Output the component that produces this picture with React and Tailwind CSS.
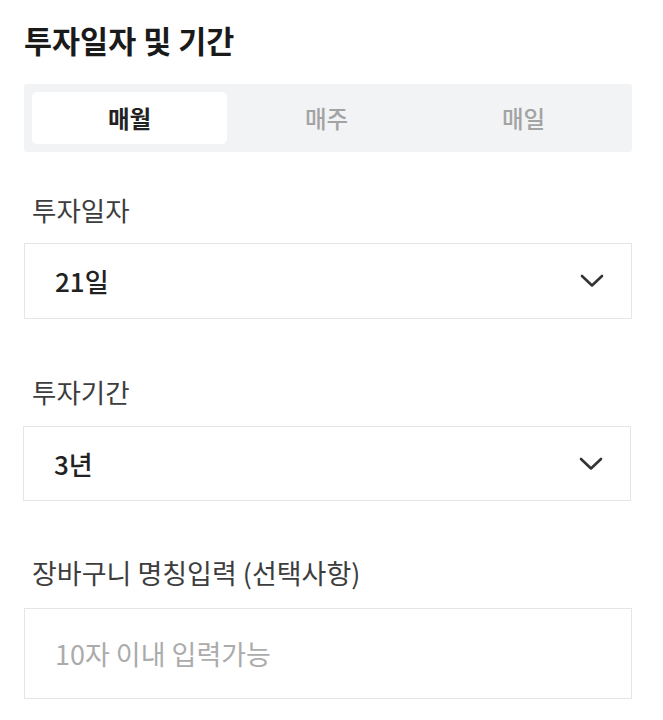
import React, { useState } from "react";

const FONT = { fontFamily: '"Noto Sans CJK KR", "Noto Sans", sans-serif' };

function Chevron() {
  return (
    <svg width="24" height="14" viewBox="0 0 24 14" fill="none">
      <polyline points="2,2 12,11.5 22,2" stroke="#333" strokeWidth="2.6" strokeLinecap="round" strokeLinejoin="round" />
    </svg>
  );
}

function SelectBox({ value, className }) {
  return (
    <button className={"flex items-center justify-between w-[608px] border-[1.5px] border-[#e5e5e5] bg-white pl-[30px] pr-[27px] text-left " + className}>
      <span className="text-[26px] leading-[30px] text-[#222] font-medium">{value}</span>
      <Chevron />
    </button>
  );
}

export default function App() {
  const [tab, setTab] = useState(0);
  const [name, setName] = useState("");
  const tabs = ["매월", "매주", "매일"];

  return (
    <div className="w-[663px] h-[720px] bg-white pl-[24px] pt-[23px] flex flex-col" style={FONT}>
      <h2 className="h-[34px] text-[30.5px] leading-[34px] font-bold text-[#1a1a1a]">투자일자 및 기간</h2>

      <div className="mt-[27px] h-[68px] w-[608px] bg-[#f2f3f5] rounded-[3px] p-[8px] flex">
        {tabs.map((t, i) => (
          <button
            key={t}
            onClick={() => setTab(i)}
            className={"w-[195px] mr-[2px] rounded-[5px] flex items-center justify-center text-[23.5px] leading-[28px] " +
              (tab === i ? "bg-white font-bold text-[#222]" : "text-[#a3a3a3] font-medium")}
          >
            {t}
          </button>
        ))}
      </div>

      <p className="mt-[43px] h-[30px] text-[26.5px] leading-[30px] text-[#3d3d3d] pl-[8px]">투자일자</p>
      <SelectBox value="21일" className="mt-[18px] h-[76px]" />

      <p className="mt-[58px] h-[30px] text-[26.5px] leading-[30px] text-[#3d3d3d] pl-[8px]">투자기간</p>
      <SelectBox value="3년" className="mt-[19px] h-[75px] -ml-[1px]" />

      <p className="mt-[57px] h-[30px] text-[27px] leading-[30px] text-[#3d3d3d] pl-[8px]">장바구니 명칭입력 (선택사항)</p>
      <input
        value={name}
        onChange={e => setName(e.target.value)}
        maxLength={10}
        placeholder="10자 이내 입력가능"
        className="mt-[20px] h-[91px] w-[608px] border-[1.5px] border-[#e5e5e5] px-[30px] text-[27px] text-[#222] placeholder:text-[#ababab] outline-none"
        style={FONT}
      />
    </div>
  );
}
